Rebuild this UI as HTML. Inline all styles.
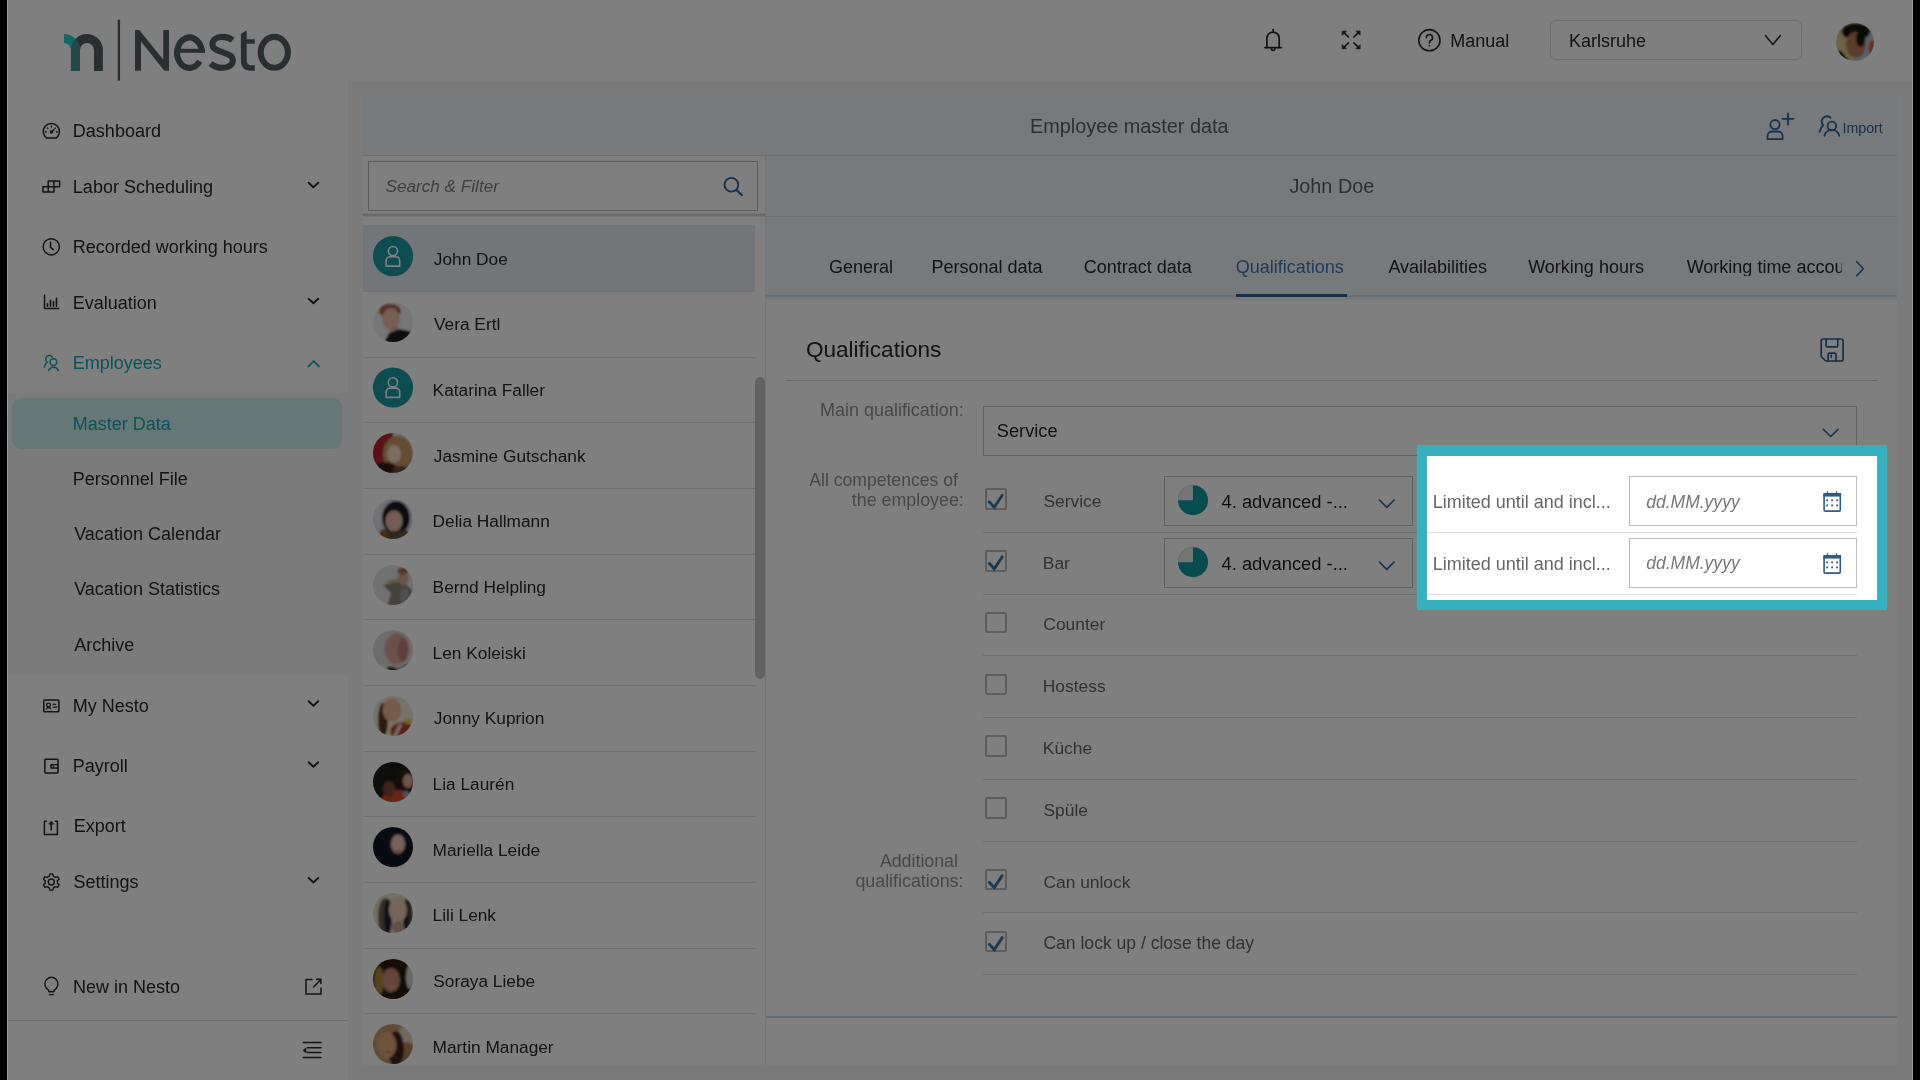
<!DOCTYPE html>
<html><head><meta charset="utf-8"><style>
html,body{margin:0;padding:0;}
body{width:1920px;height:1080px;overflow:hidden;background:#000;position:relative;font-family:"Liberation Sans", sans-serif;}
.r{position:absolute;}
.t{position:absolute;white-space:nowrap;line-height:1;}
#in{will-change:transform;}
#page{position:absolute;left:7px;top:0;width:1906px;height:1080px;background:#fff;overflow:hidden;}
#in{position:absolute;left:-7px;top:0;width:1920px;height:1080px;}
.av{position:absolute;width:40px;height:40px;border-radius:50%;overflow:hidden;}
</style></head><body>
<div id="page"><div id="in">
<div class="r" style="left:348px;top:81px;width:1565px;height:999px;background:#f6f6f6;"></div><div class="r" style="left:363px;top:96px;width:1534px;height:969px;background:#ffffff;"></div><div class="r" style="left:363px;top:96px;width:1534px;height:59px;background:#eef5fb;"></div><div class="r" style="left:363px;top:155px;width:1534px;height:1px;background:#d2e0f2;"></div><div class="r" style="left:766px;top:156px;width:1131px;height:140px;background:#eef5fb;"></div><div class="r" style="left:766px;top:216px;width:1131px;height:1px;background:#d2e0f2;"></div><div class="r" style="left:766px;top:295px;width:1131px;height:2px;background:#cddcee;"></div><div class="r" style="left:766px;top:297px;width:1131px;height:2.6000000000000227px;background:#edf2f6;"></div><div class="r" style="left:1236px;top:294px;width:111px;height:3px;background:#2f5f8f;"></div><div class="r" style="left:765px;top:156px;width:1px;height:909px;background:#e6e6e6;"></div><div class="r" style="left:363px;top:213px;width:402px;height:1px;background:#e8e8e8;"></div><div class="r" style="left:363px;top:214px;width:402px;height:2px;background:#d2d2d2;"></div><div class="r" style="left:363px;top:216px;width:402px;height:1px;background:#ececec;"></div><div class="r" style="left:363px;top:225px;width:391.5px;height:66.5px;background:#e6ecf2;"></div><div class="r" style="left:363px;top:291px;width:391.5px;height:1px;background:#e2e2e2;"></div><div class="r" style="left:363px;top:357px;width:391.5px;height:1px;background:#e2e2e2;"></div><div class="r" style="left:363px;top:422px;width:391.5px;height:1px;background:#e2e2e2;"></div><div class="r" style="left:363px;top:488px;width:391.5px;height:1px;background:#e2e2e2;"></div><div class="r" style="left:363px;top:554px;width:391.5px;height:1px;background:#e2e2e2;"></div><div class="r" style="left:363px;top:619px;width:391.5px;height:1px;background:#e2e2e2;"></div><div class="r" style="left:363px;top:685px;width:391.5px;height:1px;background:#e2e2e2;"></div><div class="r" style="left:363px;top:751px;width:391.5px;height:1px;background:#e2e2e2;"></div><div class="r" style="left:363px;top:816px;width:391.5px;height:1px;background:#e2e2e2;"></div><div class="r" style="left:363px;top:882px;width:391.5px;height:1px;background:#e2e2e2;"></div><div class="r" style="left:363px;top:948px;width:391.5px;height:1px;background:#e2e2e2;"></div><div class="r" style="left:363px;top:1013px;width:391.5px;height:1px;background:#e2e2e2;"></div><div class="r" style="left:755px;top:377px;width:10px;height:301.6px;background:#c4c4c4;border-radius:5px;"></div><div class="r" style="left:766px;top:1016px;width:1131px;height:2px;background:#c9d8ea;"></div><div class="r" style="left:7px;top:393px;width:341px;height:282.20000000000005px;background:#f7f7f7;"></div><div class="r" style="left:12.4px;top:398px;width:329.90000000000003px;height:50.5px;background:#cfeeee;border-radius:9px;"></div><div class="r" style="left:7px;top:1019.5px;width:341px;height:1.0px;background:#dddddd;"></div><div class="r" style="left:786px;top:379.5px;width:1091px;height:1.0px;background:#d2d2d2;"></div><div class="r" style="left:983.3px;top:531.9px;width:873.4000000000001px;height:1.0px;background:#dcdcdc;"></div><div class="r" style="left:983.3px;top:593.7px;width:873.4000000000001px;height:1.0px;background:#dcdcdc;"></div><div class="r" style="left:983.3px;top:655.4px;width:873.4000000000001px;height:1.0px;background:#dcdcdc;"></div><div class="r" style="left:983.3px;top:717.1px;width:873.4000000000001px;height:1.0px;background:#dcdcdc;"></div><div class="r" style="left:983.3px;top:778.8px;width:873.4000000000001px;height:1.0px;background:#dcdcdc;"></div><div class="r" style="left:983.3px;top:840.5px;width:873.4000000000001px;height:1.0px;background:#dcdcdc;"></div><div class="r" style="left:983.3px;top:912.3px;width:873.4000000000001px;height:1.0px;background:#dcdcdc;"></div><div class="r" style="left:983.3px;top:973.9px;width:873.4000000000001px;height:1.0px;background:#dcdcdc;"></div>
<div class="r" style="left:368px;top:161px;width:389.5px;height:49.5px;box-sizing:border-box;border:1px solid #b9b9b9;"></div><div class="r" style="left:1550.3px;top:20.3px;width:251.29999999999995px;height:39.400000000000006px;box-sizing:border-box;border:1px solid #d6d6d6;border-radius:6px;"></div><div class="r" style="left:983.3px;top:406.2px;width:873.4000000000001px;height:49.400000000000034px;box-sizing:border-box;border:1px solid #c2c2c2;"></div><div class="r" style="left:1164.2px;top:476.3px;width:248.5px;height:50.19999999999999px;box-sizing:border-box;border:1px solid #c2c2c2;"></div><div class="r" style="left:1164.2px;top:538.3px;width:248.5px;height:50.0px;box-sizing:border-box;border:1px solid #c2c2c2;"></div><div class="r" style="left:985.1px;top:488.3px;width:21.799999999999955px;height:21.69999999999999px;box-sizing:border-box;border:2px solid #b8b8b8;border-radius:2px;"></div><div class="r" style="left:985.1px;top:549.9px;width:21.799999999999955px;height:21.700000000000045px;box-sizing:border-box;border:2px solid #b8b8b8;border-radius:2px;"></div><div class="r" style="left:985.1px;top:611.7px;width:21.799999999999955px;height:21.700000000000045px;box-sizing:border-box;border:2px solid #b8b8b8;border-radius:2px;"></div><div class="r" style="left:985.1px;top:673.7px;width:21.799999999999955px;height:21.700000000000045px;box-sizing:border-box;border:2px solid #b8b8b8;border-radius:2px;"></div><div class="r" style="left:985.1px;top:735.2px;width:21.799999999999955px;height:21.700000000000045px;box-sizing:border-box;border:2px solid #b8b8b8;border-radius:2px;"></div><div class="r" style="left:985.1px;top:796.9px;width:21.799999999999955px;height:21.700000000000045px;box-sizing:border-box;border:2px solid #b8b8b8;border-radius:2px;"></div><div class="r" style="left:985.1px;top:868.7px;width:21.799999999999955px;height:21.700000000000045px;box-sizing:border-box;border:2px solid #b8b8b8;border-radius:2px;"></div><div class="r" style="left:985.1px;top:930.7px;width:21.799999999999955px;height:21.700000000000045px;box-sizing:border-box;border:2px solid #b8b8b8;border-radius:2px;"></div>

<svg class="r" style="left:0;top:0" width="320" height="90" viewBox="0 0 320 90">
 <defs><clipPath id="tealclip"><path d="M71,70.9 V50 A7,7 0 0 0 64,43 V34 A16,16 0 0 1 80,50 V70.9 Z"/></clipPath></defs>
 <path d="M70.9,70.9 V50 A16,16 0 0 1 102.9,50 V70.9 H94 V50 A7,7 0 0 0 80,50 V70.9 Z" fill="#525e62"/>
 <path d="M71,70.9 V50 A7,7 0 0 0 64,43 V34 A16,16 0 0 1 80,50 V70.9 Z" fill="#24d0d0"/>
 <path d="M70.9,70.9 V50 A16,16 0 0 1 102.9,50 V70.9 H94 V50 A7,7 0 0 0 80,50 V70.9 Z" fill="#449497" clip-path="url(#tealclip)"/>
 <rect x="117.7" y="19.7" width="2.4" height="61" fill="#525e62"/>
 <path d="M135,70.8 V29.9 H139.3 L163.2,59.5 V29.9 H169 V70.8 H164.3 L141,41.4 V70.8 Z" fill="#525e62"/>
 <rect x="177" y="48.8" width="28" height="4" fill="#525e62"/>
 <g fill="none" stroke="#525e62" stroke-width="6.1">
  <path d="M201.9,52.55 A12.4,15.15 0 1 0 199.7,61.3"/>
  <path d="M232.6,40.1 C229.5,37.6 226,36.9 222.2,36.9 C216.4,37 212.4,40 212.4,44.2 C212.4,49.4 218.6,50.8 223,52.3 C228.2,54 232.8,55.6 232.8,60.6 C232.8,65 228.3,67.8 222.2,67.8 C217.4,67.8 213.4,66 210.6,63.6"/>
  <ellipse cx="274.3" cy="52.3" rx="13.6" ry="15.4"/>
 </g>
 <path d="M240.9,33.9 L246.7,30.2 V39.3 H254.8 V43.75 H246.7 V59 C246.7,63.5 248,65.3 252,65.3 H254.8 V70.7 H251 C244,70.7 240.9,67 240.9,60 Z" fill="#525e62"/>
</svg>
<svg class="r" style="left:373px;top:301.87px" width="40" height="40" viewBox="0 0 40 40"><defs><clipPath id="c1"><circle cx="20" cy="20" r="20"/></clipPath><filter id="f1" x="-20%" y="-20%" width="140%" height="140%"><feGaussianBlur stdDeviation="0.9"/></filter></defs><g clip-path="url(#c1)"><g filter="url(#f1)"><rect x="-5" y="-5" width="50" height="50" fill="#eeeeee"/><ellipse cx="17" cy="9" rx="11" ry="7" fill="#a85a38"/><ellipse cx="18" cy="17" rx="9" ry="11" fill="#ecbca4"/><ellipse cx="22" cy="30" rx="4" ry="6" fill="#e0ac94"/><polygon points="10,42 16,31 26,27 42,30 42,42" fill="#1c1c1c"/></g></g></svg><svg class="r" style="left:373px;top:433.21px" width="40" height="40" viewBox="0 0 40 40"><defs><clipPath id="c3"><circle cx="20" cy="20" r="20"/></clipPath><filter id="f3" x="-20%" y="-20%" width="140%" height="140%"><feGaussianBlur stdDeviation="0.9"/></filter></defs><g clip-path="url(#c3)"><g filter="url(#f3)"><rect x="-5" y="-5" width="25" height="50" fill="#b8222a"/><rect x="20" y="-5" width="25" height="50" fill="#e8dcc4"/><ellipse cx="25" cy="21" rx="15" ry="18" fill="#c89a66"/><ellipse cx="21" cy="21" rx="7" ry="9" fill="#f2dcc4"/><ellipse cx="12" cy="36" rx="12" ry="7" fill="#2e1c18"/><ellipse cx="28" cy="38" rx="9" ry="5" fill="#6a4a30"/></g></g></svg><svg class="r" style="left:373px;top:498.88px" width="40" height="40" viewBox="0 0 40 40"><defs><clipPath id="c4"><circle cx="20" cy="20" r="20"/></clipPath><filter id="f4" x="-20%" y="-20%" width="140%" height="140%"><feGaussianBlur stdDeviation="0.9"/></filter></defs><g clip-path="url(#c4)"><g filter="url(#f4)"><rect x="-5" y="-5" width="50" height="50" fill="#dfe6ec"/><ellipse cx="23" cy="19" rx="14" ry="17" fill="#161622"/><ellipse cx="21" cy="22" rx="8.5" ry="10.5" fill="#e4bca4"/><polygon points="6,42 12,32 22,34 32,30 40,36 42,42" fill="#5c5238"/><ellipse cx="11" cy="36" rx="5" ry="6" fill="#8a5a30"/></g></g></svg><svg class="r" style="left:373px;top:564.55px" width="40" height="40" viewBox="0 0 40 40"><defs><clipPath id="c5"><circle cx="20" cy="20" r="20"/></clipPath><filter id="f5" x="-20%" y="-20%" width="140%" height="140%"><feGaussianBlur stdDeviation="0.9"/></filter></defs><g clip-path="url(#c5)"><g filter="url(#f5)"><rect x="-5" y="-5" width="50" height="50" fill="#e2e2e2"/><polygon points="10,20 24,17 34,20 40,26 40,42 14,42 18,28" fill="#8c8478"/><ellipse cx="30" cy="13" rx="5.5" ry="7" fill="#d4ac8c"/><ellipse cx="30" cy="6" rx="5.5" ry="3.5" fill="#a86c42"/><polygon points="14,16 28,13 28,17 15,19" fill="#c8a886"/><ellipse cx="32" cy="32" rx="5" ry="9" fill="#9aa0a8"/></g></g></svg><svg class="r" style="left:373px;top:630.22px" width="40" height="40" viewBox="0 0 40 40"><defs><clipPath id="c6"><circle cx="20" cy="20" r="20"/></clipPath><filter id="f6" x="-20%" y="-20%" width="140%" height="140%"><feGaussianBlur stdDeviation="0.9"/></filter></defs><g clip-path="url(#c6)"><g filter="url(#f6)"><rect x="-5" y="-5" width="50" height="50" fill="#dadada"/><ellipse cx="24" cy="19" rx="12.5" ry="15.5" fill="#d8a294"/><ellipse cx="30" cy="20" rx="5" ry="12" fill="#b88070"/><polygon points="12,42 16,36 26,39 36,33 40,42" fill="#2a2a2a"/></g></g></svg><svg class="r" style="left:373px;top:695.89px" width="40" height="40" viewBox="0 0 40 40"><defs><clipPath id="c7"><circle cx="20" cy="20" r="20"/></clipPath><filter id="f7" x="-20%" y="-20%" width="140%" height="140%"><feGaussianBlur stdDeviation="0.9"/></filter></defs><g clip-path="url(#c7)"><g filter="url(#f7)"><rect x="-5" y="-5" width="50" height="50" fill="#f0e6d4"/><ellipse cx="10" cy="24" rx="5" ry="17" fill="#5c3218"/><ellipse cx="19" cy="14" rx="9.5" ry="11.5" fill="#ecb494"/><ellipse cx="30" cy="35" rx="13" ry="9" fill="#b84422"/><polygon points="19,42 26,28 29,29 23,42" fill="#e8e0d8"/><ellipse cx="36" cy="25" rx="5" ry="3" fill="#e8d060"/></g></g></svg><svg class="r" style="left:373px;top:761.56px" width="40" height="40" viewBox="0 0 40 40"><defs><clipPath id="c8"><circle cx="20" cy="20" r="20"/></clipPath><filter id="f8" x="-20%" y="-20%" width="140%" height="140%"><feGaussianBlur stdDeviation="0.9"/></filter></defs><g clip-path="url(#c8)"><g filter="url(#f8)"><rect x="-5" y="-5" width="50" height="50" fill="#161a16"/><ellipse cx="32" cy="22" rx="9" ry="15" fill="#2a1c14"/><ellipse cx="35" cy="19" rx="5" ry="7" fill="#dcac94"/><ellipse cx="25" cy="37" rx="16" ry="9" fill="#d24c1c"/><ellipse cx="16" cy="27" rx="6" ry="8" fill="#7a4838"/><ellipse cx="33" cy="32" rx="3" ry="3" fill="#9aa8c0"/></g></g></svg><svg class="r" style="left:373px;top:827.23px" width="40" height="40" viewBox="0 0 40 40"><defs><clipPath id="c9"><circle cx="20" cy="20" r="20"/></clipPath><filter id="f9" x="-20%" y="-20%" width="140%" height="140%"><feGaussianBlur stdDeviation="0.9"/></filter></defs><g clip-path="url(#c9)"><g filter="url(#f9)"><rect x="-5" y="-5" width="50" height="50" fill="#0e1422"/><ellipse cx="23" cy="17" rx="10" ry="13" fill="#181820"/><ellipse cx="25" cy="17" rx="7" ry="9.5" fill="#ecc4b4"/><ellipse cx="25" cy="24" rx="3" ry="1.2" fill="#c87080"/></g></g></svg><svg class="r" style="left:373px;top:892.90px" width="40" height="40" viewBox="0 0 40 40"><defs><clipPath id="c10"><circle cx="20" cy="20" r="20"/></clipPath><filter id="f10" x="-20%" y="-20%" width="140%" height="140%"><feGaussianBlur stdDeviation="0.9"/></filter></defs><g clip-path="url(#c10)"><g filter="url(#f10)"><rect x="-5" y="-5" width="50" height="50" fill="#e6dec6"/><ellipse cx="12" cy="24" rx="7" ry="19" fill="#6a5844"/><ellipse cx="35" cy="24" rx="5" ry="17" fill="#5a4a38"/><ellipse cx="15" cy="24" rx="4" ry="18" fill="#1c2434"/><ellipse cx="33" cy="22" rx="3" ry="16" fill="#1c2434"/><ellipse cx="25" cy="17" rx="9" ry="12.5" fill="#ecccb4"/><ellipse cx="25" cy="34" rx="6" ry="6" fill="#c89a88"/></g></g></svg><svg class="r" style="left:373px;top:958.57px" width="40" height="40" viewBox="0 0 40 40"><defs><clipPath id="c11"><circle cx="20" cy="20" r="20"/></clipPath><filter id="f11" x="-20%" y="-20%" width="140%" height="140%"><feGaussianBlur stdDeviation="0.9"/></filter></defs><g clip-path="url(#c11)"><g filter="url(#f11)"><rect x="-5" y="-5" width="50" height="50" fill="#281810"/><ellipse cx="6" cy="22" rx="5" ry="14" fill="#b08446"/><ellipse cx="37" cy="18" rx="4" ry="12" fill="#d8d0c8"/><ellipse cx="18" cy="21" rx="9" ry="12" fill="#c88a72"/><ellipse cx="19" cy="28" rx="4" ry="1.3" fill="#d8a0a8"/></g></g></svg><svg class="r" style="left:373px;top:1024.24px" width="40" height="40" viewBox="0 0 40 40"><defs><clipPath id="c12"><circle cx="20" cy="20" r="20"/></clipPath><filter id="f12" x="-20%" y="-20%" width="140%" height="140%"><feGaussianBlur stdDeviation="0.9"/></filter></defs><g clip-path="url(#c12)"><g filter="url(#f12)"><rect x="-5" y="-5" width="50" height="50" fill="#c09a6c"/><ellipse cx="34" cy="12" rx="10" ry="10" fill="#e2d4bc"/><ellipse cx="34" cy="28" rx="8" ry="10" fill="#a88458"/><ellipse cx="23" cy="25" rx="8" ry="18" fill="#3c2212"/><ellipse cx="14" cy="21" rx="9.5" ry="13" fill="#dca474"/><ellipse cx="16" cy="28" rx="4" ry="1.3" fill="#d07860"/></g></g></svg><svg class="r" style="left:1836px;top:23.10px" width="38" height="38" viewBox="0 0 40 40"><defs><clipPath id="c99"><circle cx="20" cy="20" r="20"/></clipPath><filter id="f99" x="-20%" y="-20%" width="140%" height="140%"><feGaussianBlur stdDeviation="0.9"/></filter></defs><g clip-path="url(#c99)"><g filter="url(#f99)"><rect x="-5" y="-5" width="25" height="50" fill="#d8c890"/><rect x="20" y="-5" width="25" height="50" fill="#b0c8dc"/><ellipse cx="38" cy="26" rx="4" ry="8" fill="#d86040"/><ellipse cx="21" cy="9" rx="15" ry="9" fill="#181410"/><ellipse cx="21" cy="23" rx="10.5" ry="13.5" fill="#b87a50"/><ellipse cx="26" cy="16" rx="5" ry="9" fill="#181410"/><polygon points="-2,28 6,30 14,40 -2,42" fill="#101010"/><ellipse cx="20" cy="32" rx="4" ry="1.5" fill="#c07060"/></g></g></svg>

<svg class="r" style="left:0;top:0" width="1920" height="1080" viewBox="0 0 1920 1080" fill="none" stroke-linecap="round" stroke-linejoin="round">
 <g stroke="#262626" stroke-width="1.5">
  <!-- dashboard -->
  <path d="M46.4,138 A8.1,8.1 0 1 1 56.3,138 Z"/>
  <path d="M51.4,132 L53.7,129.9" stroke-width="1.6"/>
  <circle cx="51.4" cy="132" r="0.9" fill="#262626"/>
  <path d="M51.4,126.2 v0.9 M47.4,128 l0.5,0.6 M55.4,128 l-0.5,0.6 M45.4,132 h0.9 M56.5,132 h0.9" stroke-width="1.3"/>
  <!-- labor scheduling -->
  <path d="M48.2,180.9 h11.4 v5.9 h-5.6 v5.3 h-11 v-5.3 h5.2 Z M42.9,186.8 h11.1 M53.9,180.9 v5.9 M48.3,186.8 v5.3"/>
  <!-- clock -->
  <circle cx="51.25" cy="246.8" r="8.1"/>
  <path d="M50.5,242.2 v5.2 l2.8,2.2"/>
  <!-- evaluation -->
  <path d="M44.5,295 v13.6 h14.2"/>
  <path d="M47.5,303.8 v2.5 M50.5,300.4 v5.9 M53.5,301.6 v4.7 M56.5,298.4 v7.9" stroke-width="1.6"/>
  <!-- my nesto -->
  <rect x="43.8" y="700.1" width="15.1" height="11.7" rx="0.8"/>
  <circle cx="48.5" cy="705" r="1.9" stroke-width="1.3"/>
  <path d="M46.3,708.9 q2.2,-2.8 4.6,0" stroke-width="1.3"/>
  <path d="M53.3,704.3 h2.4 M53.3,707.2 h3.5" stroke-width="1.3"/>
  <!-- payroll -->
  <rect x="44.8" y="759.3" width="13.2" height="13.6" rx="0.8"/>
  <path d="M58,764.7 h-7 v3.4 h7"/>
  <circle cx="53.4" cy="766.4" r="0.6" fill="#262626" stroke="none"/>
  <!-- export -->
  <path d="M46.4,821.3 h-2 v13.1 h13 v-13.1 h-1.8"/>
  <path d="M51.2,830 v-7"/>
  <path d="M49,823.8 l2.2,-2.6 l2.2,2.6 Z" fill="#262626" stroke-width="0.8"/>
  <!-- settings gear -->
  <path d="M49.28,876.14 L49.86,873.83 L52.74,873.83 L53.32,876.14 L55.37,877.32 L57.66,876.66 L59.10,879.16 L57.39,880.82 L57.39,883.18 L59.10,884.84 L57.66,887.34 L55.37,886.68 L53.32,887.86 L52.74,890.17 L49.86,890.17 L49.28,887.86 L47.23,886.68 L44.94,887.34 L43.50,884.84 L45.21,883.18 L45.21,880.82 L43.50,879.16 L44.94,876.66 L47.23,877.32 Z" stroke-width="1.4"/>
  <circle cx="51.3" cy="882" r="3" stroke-width="1.4"/>
  <!-- bulb -->
  <path d="M48.8,990.4 c-2.6,-1.8 -3.9,-4 -3.9,-6.6 a6.5,6.5 0 0 1 13,0 c0,2.6 -1.3,4.8 -3.9,6.6 v1.4 h-5.2 Z" stroke-width="1.4"/>
  <path d="M49.3,994.6 h4.2" stroke-width="1.4"/>
  <!-- external link -->
  <path d="M312,979.5 h-6 v14.5 h15 v-6" stroke-width="1.5"/>
  <path d="M313.5,987 l7.2,-7.2 M316.6,979.3 h4.3 v4.3" stroke-width="1.5"/>
  <!-- collapse -->
  <path d="M303.2,1042.6 h17.9 M307.3,1047.8 h13.8 M307.3,1052.6 h13.8 M303.2,1057.6 h17.9" stroke-width="1.5"/>
  <path d="M303.3,1050.2 l2.6,-2.2 v4.4 Z" fill="#262626" stroke-width="0.8"/>
  <!-- chevrons sidebar -->
  <path d="M308.6,182.8 l4.8,4.5 l4.8,-4.5 M308.6,298.8 l4.8,4.5 l4.8,-4.5 M308.6,701.3 l4.8,4.5 l4.8,-4.5 M308.6,762.2 l4.8,4.5 l4.8,-4.5 M308.6,878.0 l4.8,4.5 l4.8,-4.5" stroke-width="1.9"/>
  <!-- bell -->
  <path d="M1266.9,47.6 v-9.3 a6.15,6.15 0 0 1 12.3,0 v9.3" stroke-width="1.7"/>
  <path d="M1265,47.6 h16.4" stroke-width="1.7"/>
  <path d="M1273.1,29.5 v2.3" stroke-width="1.7"/>
  <path d="M1271.2,48.5 a1.9,1.9 0 0 0 3.8,0" stroke-width="1.5"/>
  <!-- fullscreen -->
  <path d="M1343.3,31.9 l5.1,5.1 M1359,31.9 l-5.1,5.1 M1343.3,48 l5.1,-5.1 M1359,48 l-5.1,-5.1" stroke-width="1.7"/>
  <path d="M1342.5,31.2 h3.8 l-3.8,3.8 Z M1359.8,31.2 h-3.8 l3.8,3.8 Z M1342.5,48.7 h3.8 l-3.8,-3.8 Z M1359.8,48.7 h-3.8 l3.8,-3.8 Z" fill="#262626" stroke-width="0.8"/>
  <!-- help -->
  <circle cx="1429.4" cy="40.2" r="10.6" stroke-width="1.6"/>
  <path d="M1426.3,37.6 a3.1,3.1 0 1 1 4.3,2.9 c-0.9,0.4 -1.2,1 -1.2,1.9 v0.6" stroke-width="1.6"/>
  <circle cx="1429.4" cy="45.6" r="0.9" fill="#262626" stroke="none"/>
  <!-- karlsruhe chevron -->
  <path d="M1765.4,35.6 l7.5,8.8 l7.5,-8.8" stroke-width="1.6"/>
 </g>
 <g stroke="#14a6b0" stroke-width="1.5">
  <!-- employees icon -->
  <path d="M44.2,367.2 C44.7,364.9 45.8,363.3 47.3,362.2 A3.7,3.7 0 1 1 52.4,357"/>
  <circle cx="53.4" cy="362.1" r="3.4"/>
  <path d="M48.6,370.6 a5.2,5.2 0 0 1 9.8,0"/>
  <path d="M308.4,366.4 l5.3,-5.3 l5.3,5.3" stroke-width="1.9"/>
 </g>
 <g stroke="#2e6294" stroke-width="1.8">
  <!-- search icon -->
  <circle cx="731.4" cy="184.8" r="6.9"/>
  <path d="M736.5,190 l5.3,5" stroke-width="2.4"/>
  <!-- add person -->
  <circle cx="1775" cy="124.6" r="4.6"/>
  <path d="M1767.5,139.2 v-3.2 a4.5,4.5 0 0 1 4.5,-4.5 h6.1 a4.5,4.5 0 0 1 4.5,4.5 v3.2 Z"/>
  <path d="M1788,113.5 v11 M1782.5,118.8 h11"/>
  <!-- import icon -->
  <path d="M1819.6,131.8 C1820.2,128.5 1821.5,126.5 1823.2,125.2 A4.9,4.9 0 1 1 1830.6,117.8"/>
  <circle cx="1831.9" cy="126" r="4.3"/>
  <path d="M1824.5,135.8 a7.5,7.5 0 0 1 14.7,0"/>
  <!-- tabs chevron -->
  <path d="M1856.6,261.6 l6.8,7.1 l-6.8,7.1" stroke-width="1.5"/>
  <!-- save icon -->
  <path d="M1823.2,339 H1841.1 a2,2 0 0 1 2,2 V359 a2,2 0 0 1 -2,2 H1825.8 L1821.2,356.6 V341 a2,2 0 0 1 2,-2 Z" stroke-width="1.7"/>
  <path d="M1826.1,339 V345.4 a1.5,1.5 0 0 0 1.5,1.5 H1836.3 a1.5,1.5 0 0 0 1.5,-1.5 V339 M1828.1,361 V354.4 a1.3,1.3 0 0 1 1.3,-1.3 H1834.7 a1.3,1.3 0 0 1 1.3,1.3 V361" stroke-width="1.7"/>
  <path d="M1831.2,355 V357.4" stroke-width="1.6"/>
  <!-- select chevrons -->
  <path d="M1823.2,429.2 l7.5,7.3 l7.5,-7.3" stroke-width="1.6"/>
  <path d="M1379.4,500 l7.4,7.4 l7.4,-7.4 M1379.4,562 l7.4,7.4 l7.4,-7.4" stroke-width="1.6"/>
 </g>
 <g stroke="#3a70a6" stroke-width="2.9" stroke-linecap="round" stroke-linejoin="miter">
  <path d="M989.3,501.9 L994.3,507.2 L1002.2,495.2"/>
  <path d="M989.3,563.5 L994.3,568.8 L1002.2,556.8"/>
  <path d="M989.3,882.3 L994.3,887.6 L1002.2,875.6"/>
  <path d="M989.3,944.3 L994.3,949.6 L1002.2,937.6"/>
 </g>
<circle cx="393" cy="256.2" r="20.1" fill="#1b9aa0"/>
<g stroke="#ffffff" stroke-width="1.6" fill="none"><circle cx="392.9" cy="251.1" r="4.6"/><path d="M386.1,266.1 v-5.4 a3.9,3.9 0 0 1 3.9,-3.9 h5.8 a3.9,3.9 0 0 1 3.9,3.9 v5.4 Z"/></g>
<circle cx="393" cy="387.5" r="20.1" fill="#1b9aa0"/>
<g stroke="#ffffff" stroke-width="1.6" fill="none"><circle cx="392.9" cy="382.4" r="4.6"/><path d="M386.1,397.4 v-5.4 a3.9,3.9 0 0 1 3.9,-3.9 h5.8 a3.9,3.9 0 0 1 3.9,3.9 v5.4 Z"/></g>
<circle cx="1193" cy="500.2" r="15" fill="#0e9aa0"/><path d="M1193,500.2 v-15 a15,15 0 0 0 -15,15 Z" fill="#e8e8e8"/>
<circle cx="1193" cy="562.2" r="15" fill="#0e9aa0"/><path d="M1193,562.2 v-15 a15,15 0 0 0 -15,15 Z" fill="#e8e8e8"/>
</svg>
<div class="t" style="left:72.86px;top:122.00px;font-size:18.00px;color:#262626;">Dashboard</div><div class="t" style="left:72.86px;top:178.00px;font-size:18.00px;color:#262626;">Labor Scheduling</div><div class="t" style="left:72.76px;top:238.00px;font-size:18.00px;color:#262626;">Recorded working hours</div><div class="t" style="left:72.76px;top:294.00px;font-size:18.00px;color:#262626;">Evaluation</div><div class="t" style="left:72.66px;top:354.00px;font-size:18.00px;color:#14a6b0;">Employees</div><div class="t" style="left:72.66px;top:415.00px;font-size:18.00px;color:#14a6b0;">Master Data</div><div class="t" style="left:72.76px;top:470.00px;font-size:18.00px;color:#262626;">Personnel File</div><div class="t" style="left:74.20px;top:525.00px;font-size:18.00px;color:#262626;">Vacation Calendar</div><div class="t" style="left:74.20px;top:580.00px;font-size:18.00px;color:#262626;">Vacation Statistics</div><div class="t" style="left:74.20px;top:636.00px;font-size:18.00px;color:#262626;">Archive</div><div class="t" style="left:72.76px;top:697.00px;font-size:18.00px;color:#262626;">My Nesto</div><div class="t" style="left:72.76px;top:757.00px;font-size:18.00px;color:#262626;">Payroll</div><div class="t" style="left:73.76px;top:817.00px;font-size:18.00px;color:#262626;">Export</div><div class="t" style="left:73.48px;top:873.00px;font-size:18.00px;color:#262626;">Settings</div><div class="t" style="left:73.06px;top:978.00px;font-size:18.00px;color:#262626;">New in Nesto</div><div class="t" style="left:1450.26px;top:32.00px;font-size:18.00px;color:#262626;">Manual</div><div class="t" style="left:1568.96px;top:32.00px;font-size:18.00px;color:#262626;">Karlsruhe</div><div class="t" style="left:1029.91px;top:117.00px;font-size:19.87px;color:#5c5c5c;">Employee master data</div><div class="t" style="left:1842.47px;top:121.00px;font-size:14.22px;color:#2e6294;">Import</div><div class="t" style="left:1289.40px;top:177.00px;font-size:19.84px;color:#5c5c5c;">John Doe</div><div class="t" style="left:828.90px;top:258.00px;font-size:18.00px;color:#262626;">General</div><div class="t" style="left:931.46px;top:258.00px;font-size:18.00px;color:#262626;">Personal data</div><div class="t" style="left:1083.70px;top:258.00px;font-size:18.00px;color:#262626;">Contract data</div><div class="t" style="left:1235.78px;top:258.00px;font-size:18.00px;color:#3f78ad;">Qualifications</div><div class="t" style="left:1388.40px;top:258.00px;font-size:18.00px;color:#262626;">Availabilities</div><div class="t" style="left:1528.20px;top:258.00px;font-size:18.00px;color:#262626;">Working hours</div><div class="t" style="left:1686.70px;top:258.00px;font-size:18.00px;color:#262626;width:155.30px;overflow:hidden;">Working time accounts</div><div class="t" style="left:385.46px;top:178.00px;font-size:17.16px;color:#7c7c7c;font-style:italic;">Search &amp; Filter</div><div class="t" style="left:433.83px;top:251.00px;font-size:17.30px;color:#262626;">John Doe</div><div class="t" style="left:434.00px;top:316.00px;font-size:17.30px;color:#262626;">Vera Ertl</div><div class="t" style="left:432.62px;top:382.00px;font-size:17.30px;color:#262626;">Katarina Faller</div><div class="t" style="left:433.83px;top:448.00px;font-size:17.30px;color:#262626;">Jasmine Gutschank</div><div class="t" style="left:432.62px;top:513.00px;font-size:17.30px;color:#262626;">Delia Hallmann</div><div class="t" style="left:432.62px;top:579.00px;font-size:17.30px;color:#262626;">Bernd Helpling</div><div class="t" style="left:432.62px;top:645.00px;font-size:17.30px;color:#262626;">Len Koleiski</div><div class="t" style="left:433.83px;top:710.00px;font-size:17.30px;color:#262626;">Jonny Kuprion</div><div class="t" style="left:432.62px;top:776.00px;font-size:17.30px;color:#262626;">Lia Laurén</div><div class="t" style="left:432.62px;top:842.00px;font-size:17.30px;color:#262626;">Mariella Leide</div><div class="t" style="left:432.62px;top:907.00px;font-size:17.30px;color:#262626;">Lili Lenk</div><div class="t" style="left:433.31px;top:973.00px;font-size:17.30px;color:#262626;">Soraya Liebe</div><div class="t" style="left:432.62px;top:1039.00px;font-size:17.30px;color:#262626;">Martin Manager</div><div class="t" style="left:805.90px;top:339.00px;font-size:22.57px;color:#262626;">Qualifications</div><div class="t" style="left:820.06px;top:402.00px;font-size:17.97px;color:#8e8e8e;">Main qualification:</div><div class="t" style="left:809.30px;top:472.00px;font-size:17.58px;color:#8e8e8e;">All competences of</div><div class="t" style="left:851.82px;top:492.00px;font-size:17.84px;color:#8e8e8e;">the employee:</div><div class="t" style="left:996.87px;top:422.00px;font-size:18.20px;color:#1a1a1a;">Service</div><div class="t" style="left:1043.50px;top:493.00px;font-size:17.40px;color:#626262;">Service</div><div class="t" style="left:1042.81px;top:555.00px;font-size:17.40px;color:#626262;">Bar</div><div class="t" style="left:1043.33px;top:616.00px;font-size:17.40px;color:#626262;">Counter</div><div class="t" style="left:1042.81px;top:678.00px;font-size:17.40px;color:#626262;">Hostess</div><div class="t" style="left:1042.81px;top:740.00px;font-size:17.40px;color:#626262;">Küche</div><div class="t" style="left:1043.50px;top:802.00px;font-size:17.40px;color:#626262;">Spüle</div><div class="t" style="left:879.90px;top:853.00px;font-size:17.78px;color:#8e8e8e;">Additional</div><div class="t" style="left:855.39px;top:873.00px;font-size:17.85px;color:#8e8e8e;">qualifications:</div><div class="t" style="left:1043.43px;top:874.00px;font-size:17.40px;color:#626262;">Can unlock</div><div class="t" style="left:1043.42px;top:935.00px;font-size:17.56px;color:#626262;">Can lock up / close the day</div><div class="t" style="left:1221.53px;top:493.00px;font-size:18.35px;color:#1a1a1a;">4. advanced -...</div><div class="t" style="left:1221.53px;top:555.00px;font-size:18.35px;color:#1a1a1a;">4. advanced -...</div>
</div>
<div class="r" style="left:0;top:0;width:1906px;height:1080px;background:rgba(0,0,0,0.5)"></div>
</div>
<div class="r" style="left:7px;top:0;width:1px;height:1080px;background:#9a9a9a"></div>
<div class="r" style="left:1912px;top:0;width:1px;height:1080px;background:#9a9a9a"></div>
<div class="r" style="left:0;top:0;width:1920px;height:1080px;will-change:transform;"><div class="r" style="left:1416.7px;top:445.3px;width:470px;height:164.7px;background:#37b0c0;"></div>
<div class="r" style="left:1426.7px;top:456px;width:450px;height:144px;background:#fff;"></div>
<div class="r" style="left:1426.7px;top:532px;width:430px;height:1px;background:#e0e0e0;"></div>
<div class="r" style="left:1426.7px;top:594px;width:430px;height:1px;background:#e0e0e0;"></div>
<div class="r" style="left:1629.2px;top:476.3px;width:227.5px;height:50px;box-sizing:border-box;border:1.5px solid #bdbdbd;"></div>
<div class="r" style="left:1629.2px;top:538.3px;width:227.5px;height:49.5px;box-sizing:border-box;border:1.5px solid #bdbdbd;"></div>
<svg class="r" style="left:0;top:0" width="1920" height="1080" viewBox="0 0 1920 1080" fill="none">
<g stroke="#2c5b87" stroke-width="1.6"><rect x="1824.1" y="494.2" width="16.2" height="16.9" rx="1.2"/></g>
<rect x="1823.3" y="493" width="17.8" height="3.6" fill="#2c5b87"/>
<g fill="#2c5b87"><rect x="1826.2" y="499.4" width="1.8" height="1.8"/><rect x="1826.2" y="504.5" width="1.8" height="1.8"/><rect x="1831.2" y="499.4" width="1.8" height="1.8"/><rect x="1831.2" y="504.5" width="1.8" height="1.8"/><rect x="1836.2" y="499.4" width="1.8" height="1.8"/><rect x="1836.2" y="504.5" width="1.8" height="1.8"/>
<rect x="1826.8" y="491.3" width="1.4" height="3"/><rect x="1835.8" y="491.3" width="1.4" height="3"/></g>
<g stroke="#2c5b87" stroke-width="1.6"><rect x="1824.1" y="556.2" width="16.2" height="16.9" rx="1.2"/></g>
<rect x="1823.3" y="555" width="17.8" height="3.6" fill="#2c5b87"/>
<g fill="#2c5b87"><rect x="1826.2" y="561.4" width="1.8" height="1.8"/><rect x="1826.2" y="566.5" width="1.8" height="1.8"/><rect x="1831.2" y="561.4" width="1.8" height="1.8"/><rect x="1831.2" y="566.5" width="1.8" height="1.8"/><rect x="1836.2" y="561.4" width="1.8" height="1.8"/><rect x="1836.2" y="566.5" width="1.8" height="1.8"/>
<rect x="1826.8" y="553.3" width="1.4" height="3"/><rect x="1835.8" y="553.3" width="1.4" height="3"/></g>
</svg><div class="t" style="left:1432.76px;top:493.00px;font-size:17.99px;color:#666666;">Limited until and incl...</div><div class="t" style="left:1432.76px;top:555.00px;font-size:17.99px;color:#666666;">Limited until and incl...</div><div class="t" style="left:1646.17px;top:494.00px;font-size:17.54px;color:#777777;font-style:italic;">dd.MM.yyyy</div><div class="t" style="left:1646.17px;top:555.00px;font-size:17.54px;color:#777777;font-style:italic;">dd.MM.yyyy</div></div>
</body></html>
